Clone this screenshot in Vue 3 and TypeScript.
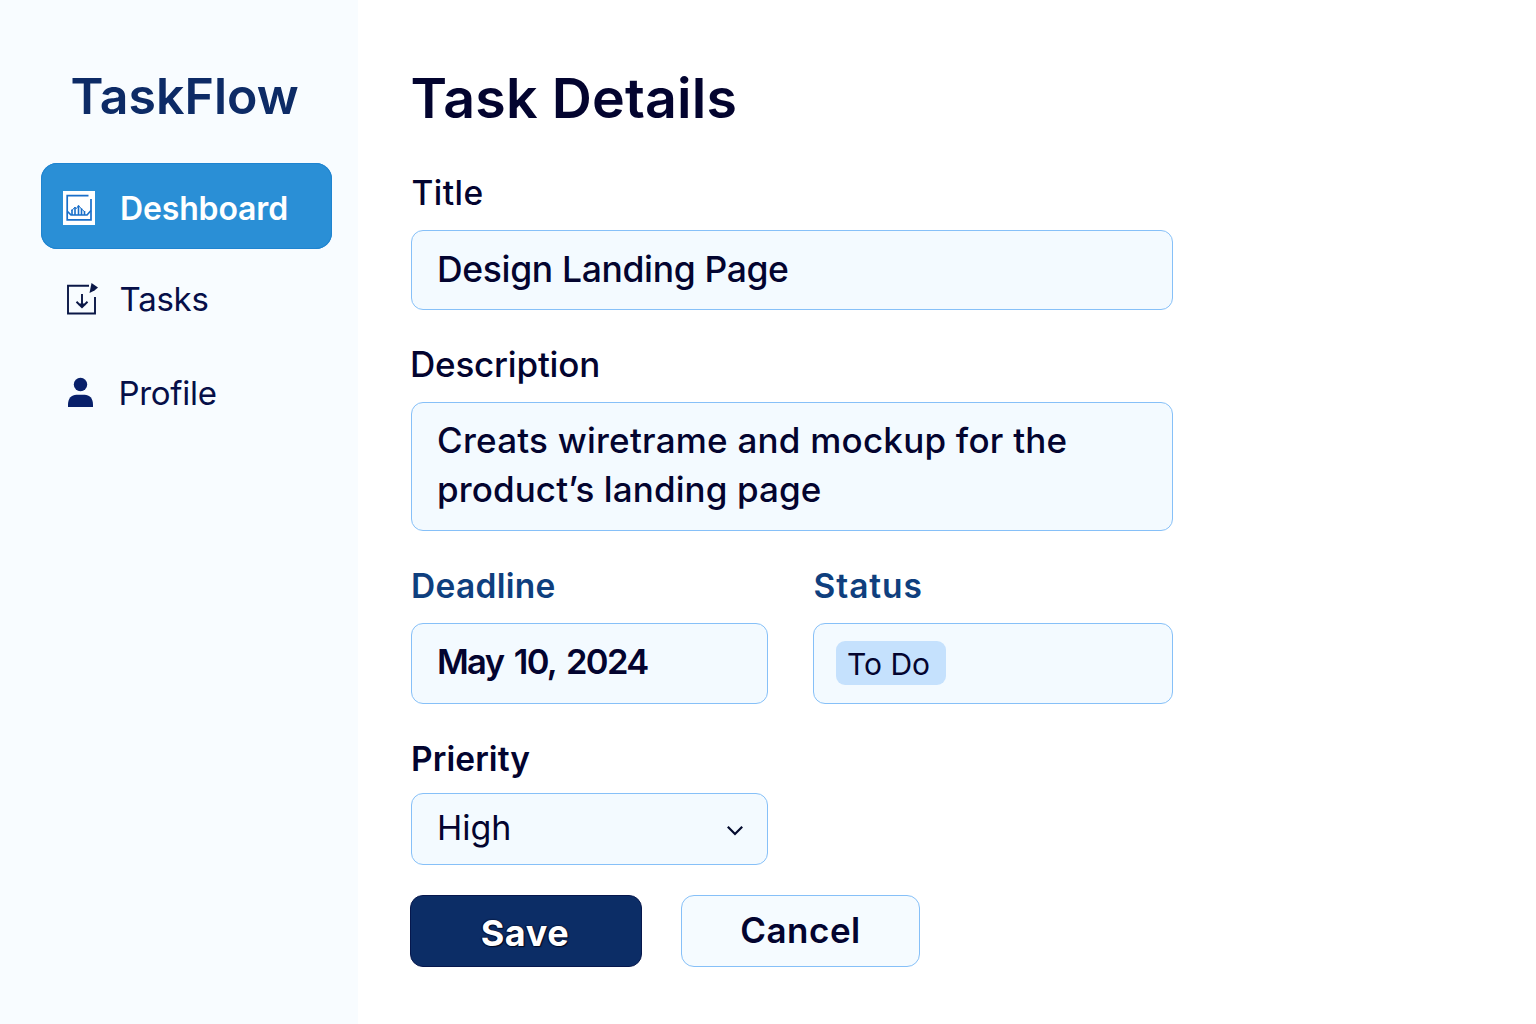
<script setup lang="ts">
import { ref } from 'vue'

type NavKey = 'dashboard' | 'tasks' | 'profile'

const nav: { key: NavKey; label: string }[] = [
  { key: 'dashboard', label: 'Deshboard' },
  { key: 'tasks', label: 'Tasks' },
  { key: 'profile', label: 'Profile' },
]

const active = ref<NavKey>('dashboard')

const task = {
  title: 'Design Landing Page',
  description: ['Creats wiretrame and mockup for the', 'product’s landing page'],
  deadline: 'May 10, 2024',
  status: 'To Do',
  priority: 'High',
}
</script>

<template>
  <div class="app">
    <aside class="sidebar">
      <div class="brand">TaskFlow</div>
      <nav class="nav">
        <a
          v-for="item in nav"
          :key="item.key"
          class="nav-item"
          :class="[item.key, { active: item.key === active }]"
          @click="active = item.key"
        >
          <svg v-if="item.key === 'dashboard'" class="icon" width="32" height="34" viewBox="0 0 32 34">
            <rect width="32" height="34" fill="#fff" />
            <path d="M25.500 4.700H4.200V28.800H28V8" fill="none" stroke="#1a6fc9" stroke-width="1.700" />
            <path d="M4.500 20.500L8 24H24L28 19.500" fill="none" stroke="#1a6fc9" stroke-width="1.700" />
            <path d="M9 24V18.500M12 24V16M15.500 24V14.500M18.500 24V17.500M21.500 24V20" stroke="#1a6fc9" stroke-width="1.600" />
            <path d="M8.500 20L11.500 16.500L13.500 17.500L15.500 14.500L18.500 18L22 21" fill="none" stroke="#1a6fc9" stroke-width="1" />
          </svg>
          <svg v-else-if="item.key === 'tasks'" class="icon" width="36" height="34" viewBox="0 0 36 34">
            <path d="M26 3.800H5V31.500H32V15" fill="none" stroke="#0a1747" stroke-width="1.900" />
            <path d="M19 12V25M13.500 19.800L19 25.200L24.500 19.800M15.500 22.500H22.500" fill="none" stroke="#0a1747" stroke-width="1.900" />
            <path d="M28.500 1L35 5.500L31.500 8.500L26.500 11Z" fill="#0a1747" />
          </svg>
          <svg v-else class="icon" width="34" height="34" viewBox="0 0 34 34">
            <circle cx="16.500" cy="8.500" r="6.700" fill="#08206a" />
            <path d="M4 31V28.500C4 22.500 7.500 18.800 12.500 18.800H20.500C25.500 18.800 29 22.500 29 28.500V31Z" fill="#08206a" />
          </svg>
          <span class="nav-label">{{ item.label }}</span>
        </a>
      </nav>
    </aside>

    <main class="main">
      <h1>Task Details</h1>

      <label class="label title-label">Title</label>
      <div class="field title-field">{{ task.title }}</div>

      <label class="label desc-label">Description</label>
      <div class="field desc-field">
        <div v-for="line in task.description" :key="line">{{ line }}</div>
      </div>

      <div class="row">
        <div class="deadline">
          <label class="label blue">Deadline</label>
          <div class="field date-field">{{ task.deadline }}</div>
        </div>
        <div class="status">
          <label class="label blue">Status</label>
          <div class="field status-field"><span class="chip">{{ task.status }}</span></div>
        </div>
      </div>

      <label class="label priority-label">Prierity</label>
      <div class="field select">
        <span>{{ task.priority }}</span>
        <svg width="18" height="12" viewBox="0 0 18 12">
          <path d="M1.800 1.800L9 9L16.200 1.800" fill="none" stroke="#030a2e" stroke-width="2.200" />
        </svg>
      </div>

      <div class="actions">
        <button class="btn save" type="button">Save</button>
        <button class="btn cancel" type="button">Cancel</button>
      </div>
    </main>
  </div>
</template>

<style>
body {
  margin: 0;
  background: #fff;
}
</style>

<style scoped>
.app {
  display: flex;
  width: 1536px;
  height: 1024px;
  overflow: hidden;
  background: #fff;
  font-family: Inter, 'Liberation Sans', sans-serif;
  color: #03042f;
}

.app * {
  box-sizing: border-box;
}

.sidebar {
  width: 358px;
  flex: none;
  padding-top: 66px;
  background: #f8fcff;
}

.brand {
  height: 60px;
  padding-left: 70.5px;
  font-size: 50px;
  font-weight: 600;
  line-height: 60px;
  letter-spacing: 0;
  color: #0d2b66;
}

.nav {
  display: flex;
  flex-direction: column;
  padding: 37px 0 0 41px;
}

.nav-item {
  display: flex;
  align-items: center;
  width: 290.5px;
  color: #060f48;
  font-size: 33px;
  cursor: pointer;
}

.nav-item .icon {
  flex: none;
}

.dashboard {
  height: 86px;
  padding: 4px 0 0 22px;
  border-radius: 16px;
  font-size: 32px;
}

.dashboard.active {
  background: #2a8fd6;
  box-shadow: inset 0 0 0 1px #1f84d0;
  color: #fff;
  font-weight: 600;
}

.dashboard .nav-label {
  margin-left: 25px;
  letter-spacing: -0.15px;
}

.tasks {
  height: 94px;
  padding: 6px 0 0 22px;
}

.tasks .nav-label {
  margin-left: 20.5px;
  letter-spacing: -0.24px;
}

.profile {
  height: 94px;
  padding: 6px 0 0 23px;
}

.profile .nav-label {
  margin-left: 20.5px;
  letter-spacing: -0.3px;
}

.main {
  width: 762px;
  margin-left: 53px;
  display: flex;
  flex-direction: column;
}

h1 {
  margin: 68px 0 0 -0.5px;
  height: 60px;
  font-size: 55.5px;
  font-weight: 600;
  line-height: 60px;
  letter-spacing: 0.16px;
}

.label {
  display: block;
  height: 40px;
  line-height: 40px;
  font-size: 33.5px;
  font-weight: 500;
  white-space: nowrap;
}

.field {
  display: flex;
  align-items: center;
  padding-left: 25px;
  border: 1px solid #86c0f8;
  border-radius: 12px;
  background: #f3faff;
  font-size: 35px;
  font-weight: 500;
  white-space: nowrap;
}

.title-label {
  margin-top: 45px;
  padding-left: 0.5px;
  letter-spacing: 0.45px;
}

.title-field {
  height: 80px;
  margin-top: 17px;
  padding-bottom: 2px;
  font-size: 35.5px;
  letter-spacing: -0.35px;
}

.desc-label {
  margin-top: 34px;
  margin-bottom: 1px;
  margin-left: -1px;
  font-size: 35px;
  letter-spacing: -0.2px;
}

.desc-field {
  flex-direction: column;
  align-items: flex-start;
  height: 129px;
  margin-top: 17px;
  padding: 13px 0 0 25px;
  line-height: 49px;
  letter-spacing: 0.23px;
}

.desc-field div:last-child {
  letter-spacing: 0.1px;
}

.row {
  display: flex;
  gap: 45px;
  margin-top: 35px;
}

.deadline {
  width: 357px;
}

.status {
  width: 360px;
}

.blue {
  font-weight: 600;
  color: #0f3f7e;
}

.deadline .blue {
  letter-spacing: 0.3px;
}

.status .blue {
  margin-left: 0.5px;
  letter-spacing: 0.93px;
}

.date-field,
.status-field {
  height: 81px;
  margin-top: 17px;
}

.date-field {
  padding-bottom: 4px;
  font-size: 34.5px;
  font-weight: 600;
  letter-spacing: -1.7px;
  word-spacing: 3.6px;
}

.status-field {
  padding: 0 0 2px 22px;
}

.chip {
  height: 44px;
  width: 110px;
  padding-left: 11px;
  border-radius: 9px;
  background: #c5e1fd;
  font-size: 30px;
  font-weight: 400;
  line-height: 47px;
  letter-spacing: 0;
}

.priority-label {
  margin-top: 35px;
  font-weight: 600;
  letter-spacing: 0.08px;
}

.select {
  justify-content: space-between;
  width: 357px;
  height: 72px;
  margin-top: 14px;
  padding: 0 23px 3px 25px;
  font-size: 34px;
  font-weight: 400;
  letter-spacing: 0;
}

.select svg {
  margin-top: 7px;
}

.actions {
  display: flex;
  gap: 39px;
  margin-top: 30px;
  margin-left: -1px;
}

.btn {
  height: 72px;
  padding: 0;
  border-radius: 13px;
  font-family: inherit;
  text-align: center;
}

.save {
  width: 232px;
  padding: 3px 2px 0 0;
  border: 1px solid #06174d;
  background: #0c2d66;
  color: #fff;
  font-size: 36px;
  font-weight: 700;
  letter-spacing: 0.6px;
  text-shadow: 0 0 2px #000a24, 1px 1px 1px #000a24, -1px 0 1px #000a24;
}

.cancel {
  width: 239px;
  border: 1px solid #86c0f8;
  background: #f5fbff;
  color: #03042f;
  font-size: 35px;
  font-weight: 600;
  padding-bottom: 2px;
  letter-spacing: 0.5px;
}
</style>
